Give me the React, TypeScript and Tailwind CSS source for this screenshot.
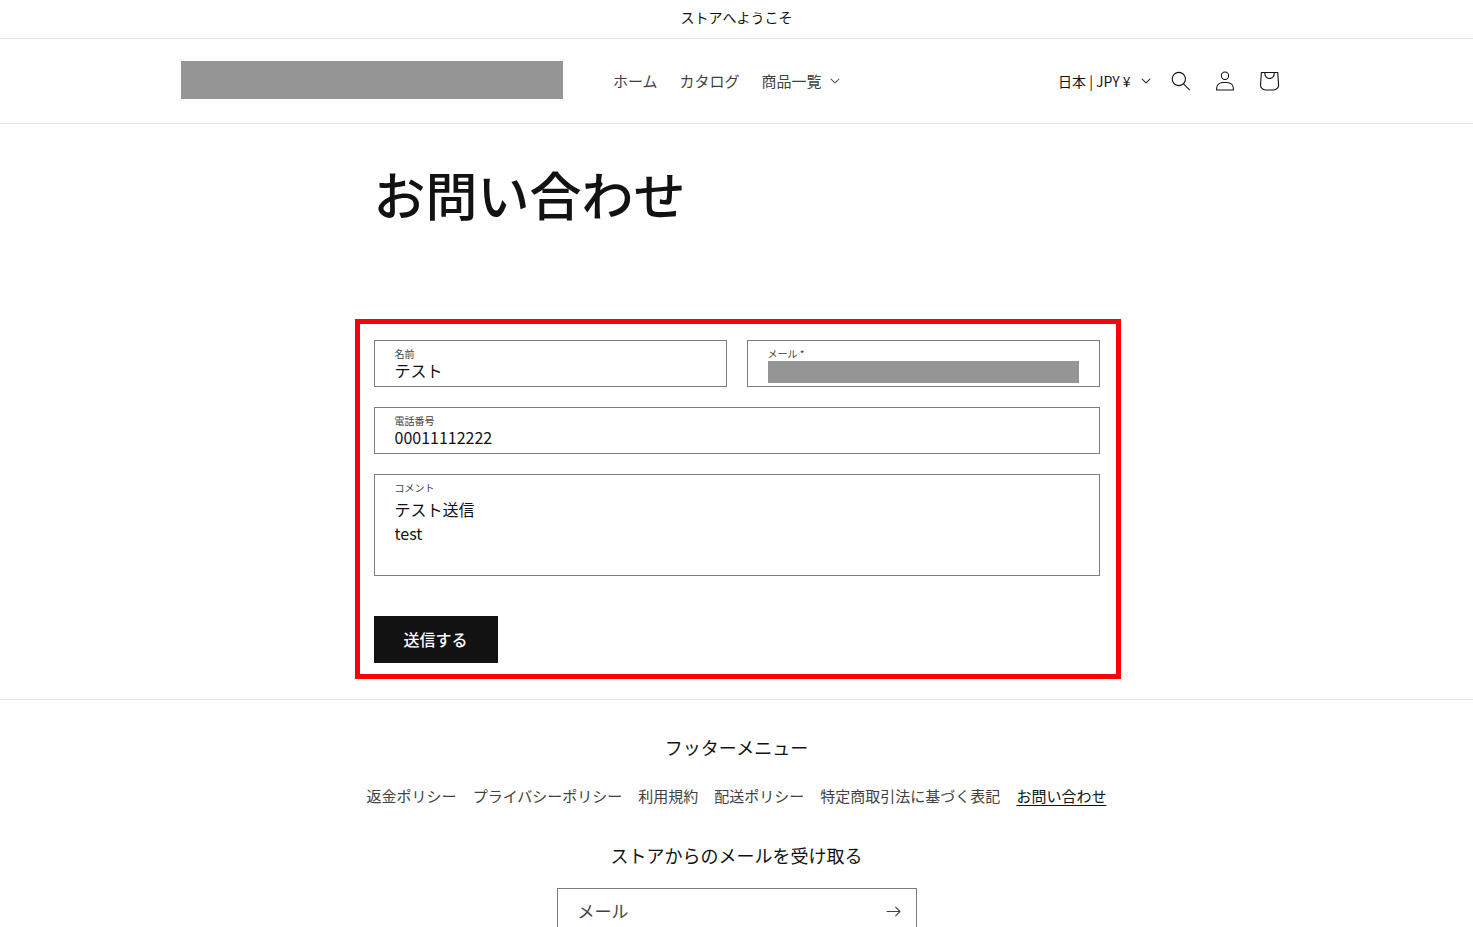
import React from "react";

function Caret({ className = "" }: { className?: string }) {
  return (
    <svg viewBox="0 0 10 6" className={`h-[6px] w-[10px] ${className}`} fill="currentColor" aria-hidden="true">
      <path
        fillRule="evenodd"
        clipRule="evenodd"
        d="M9.354.646a.5.5 0 00-.708 0L5 4.293 1.354.646a.5.5 0 00-.708.708l4 4a.5.5 0 00.708 0l4-4a.5.5 0 000-.708z"
      />
    </svg>
  );
}

function SearchIcon() {
  return (
    <svg viewBox="0 0 18 19" className="h-5 w-5" fill="currentColor" aria-hidden="true">
      <path
        fillRule="evenodd"
        clipRule="evenodd"
        d="M11.03 11.68A5.784 5.784 0 112.85 3.5a5.784 5.784 0 018.18 8.18zm.26 1.12a6.78 6.78 0 11.72-.7l5.4 5.4a.5.5 0 11-.71.7l-5.41-5.4z"
      />
    </svg>
  );
}

function AccountIcon() {
  return (
    <svg viewBox="0 0 18 19" className="h-5 w-5" fill="currentColor" aria-hidden="true">
      <path
        fillRule="evenodd"
        clipRule="evenodd"
        d="M6 4.5a3 3 0 116 0 3 3 0 01-6 0zm3-4a4 4 0 100 8 4 4 0 000-8zm5.58 12.15c1.12.82 1.83 2.24 1.91 4.85H1.51c.08-2.6.79-4.03 1.9-4.85C4.66 11.75 6.5 11.5 9 11.5s4.35.26 5.58 1.15zM9 10.5c-2.5 0-4.65.24-6.17 1.35C1.27 12.98.5 14.93.5 18v.5h17V18c0-3.07-.77-5.02-2.33-6.15-1.52-1.1-3.67-1.35-6.17-1.35z"
      />
    </svg>
  );
}

function CartIcon() {
  return (
    <svg viewBox="0 0 40 40" className="h-11 w-11" fill="currentColor" aria-hidden="true">
      <path
        fillRule="evenodd"
        d="M15.75 11.8h-3.16l-.77 11.6a5 5 0 0 0 4.99 5.34h7.38a5 5 0 0 0 4.99-5.33L28.4 11.8zm0 1h-2.22l-.71 10.67a4 4 0 0 0 3.99 4.27h7.38a4 4 0 0 0 4-4.27l-.72-10.67h-2.22v.63a4.75 4.75 0 1 1-9.5 0zm8.5 0h-7.5v.63a3.75 3.75 0 1 0 7.5 0z"
      />
    </svg>
  );
}

function ArrowIcon() {
  return (
    <svg viewBox="0 0 14 10" className="h-[11px] w-[15px]" fill="currentColor" aria-hidden="true">
      <path
        fillRule="evenodd"
        clipRule="evenodd"
        d="M8.537.808a.5.5 0 01.817-.162l4 4a.5.5 0 010 .708l-4 4a.5.5 0 11-.708-.708L11.793 5.5H1a.5.5 0 010-1h10.793L8.646 1.354a.5.5 0 01-.109-.546z"
      />
    </svg>
  );
}

function Field({ id, label, children }: { id: string; label: string; children: React.ReactNode }) {
  return (
    <div className="flex flex-col border border-[#7c7c7c] px-5 pt-[6px]">
      <label htmlFor={id} className="text-[10px] leading-[14px] text-[#414141]">
        {label}
      </label>
      {children}
    </div>
  );
}

const footerLinks = [
  "返金ポリシー",
  "プライバシーポリシー",
  "利用規約",
  "配送ポリシー",
  "特定商取引法に基づく表記",
];

export default function App() {
  return (
    <div className="bg-white font-['Noto_Sans_CJK_JP',sans-serif] text-[#121212]">
      <div className="border-b border-[#e7e7e7]">
        <p className="pb-[10px] pt-[6px] text-center text-sm leading-[22px]">ストアへようこそ</p>
      </div>

      <header className="border-b border-[#e7e7e7]">
        <div className="mx-auto flex h-[84px] max-w-[1201px] items-center pl-[45px] pr-[46px]">
          <a href="#" aria-label="ストア" className="mb-[2px] h-[38px] w-[382px] bg-[#959595]" />
          <nav className="ml-[50px] flex items-center gap-[22px] text-[15px] leading-6 text-[#414141]">
            <a href="#">ホーム</a>
            <a href="#">カタログ</a>
            <button type="button" className="flex items-center gap-2">
              商品一覧
              <Caret />
            </button>
          </nav>
          <div className="ml-auto flex items-center">
            <div className="relative mr-2 flex items-center">
              <select aria-label="国/地域" className="appearance-none bg-transparent pr-5 text-sm leading-6">
                <option>日本 | JPY ¥</option>
              </select>
              <Caret className="pointer-events-none absolute right-0" />
            </div>
            <button type="button" aria-label="検索" className="flex h-11 w-11 items-center justify-center">
              <SearchIcon />
            </button>
            <a href="#" aria-label="ログイン" className="flex h-11 w-11 items-center justify-center">
              <AccountIcon />
            </a>
            <a href="#" aria-label="カート" className="flex h-11 w-11 items-center justify-center">
              <CartIcon />
            </a>
          </div>
        </div>
      </header>

      <main className="mx-auto w-full max-w-[726px] pb-5 pt-[34px]">
        <h1 className="mb-[89px] text-[52px] font-medium leading-[72px]">お問い合わせ</h1>
        <form
          className="-ml-[19px] -mr-[21px] flex flex-col items-start border-[5px] border-[#fb0007] pb-[11px] pl-[14px] pr-4 pt-4"
          onSubmit={(e) => e.preventDefault()}
        >
          <div className="flex w-full flex-col gap-5">
            <div className="grid grid-cols-2 gap-5">
              <Field id="name" label="名前">
                <input id="name" type="text" defaultValue="テスト" className="mb-[3px] h-[22px] pb-1 outline-none" />
              </Field>
              <Field id="email" label="メール *">
                <input id="email" type="email" className="mb-[3px] h-[22px] w-full bg-[#959595] outline-none" />
              </Field>
            </div>
            <Field id="phone" label="電話番号">
              <input
                id="phone"
                type="tel"
                defaultValue="00011112222"
                className="mb-[3px] h-[22px] pb-1 outline-none"
              />
            </Field>
            <Field id="comment" label="コメント">
              <textarea
                id="comment"
                defaultValue={"テスト送信\ntest"}
                className="h-20 resize-none pt-[2px] leading-6 outline-none"
              />
            </Field>
          </div>
          <button
            type="submit"
            className="mt-10 h-[47px] bg-[#121212] px-[30px] pb-[2px] text-base font-medium leading-6 text-white"
          >
            送信する
          </button>
        </form>
      </main>

      <footer className="flex flex-col items-center border-t border-[#e7e7e7] px-4 pb-9 pt-[35px]">
        <h2 className="text-lg leading-6">フッターメニュー</h2>
        <ul className="mt-[25px] flex flex-wrap justify-center gap-4 text-[15px] leading-6 text-[#414141]">
          {footerLinks.map((text) => (
            <li key={text}>
              <a href="#">{text}</a>
            </li>
          ))}
          <li>
            <a href="#" aria-current="page" className="text-[#121212] underline underline-offset-[3px]">
              お問い合わせ
            </a>
          </li>
        </ul>
        <h2 className="mt-[35px] text-lg leading-6">ストアからのメールを受け取る</h2>
        <form
          className="mt-[21px] flex h-[47px] w-full max-w-[360px] items-center border border-[#7c7c7c] text-[#414141]"
          onSubmit={(e) => e.preventDefault()}
        >
          <input
            type="email"
            aria-label="メール"
            placeholder="メール"
            className="min-w-0 flex-1 pb-[2px] pl-5 text-[17px] outline-none placeholder:text-[#414141]"
          />
          <button type="submit" aria-label="登録" className="flex h-11 w-11 items-center justify-center">
            <ArrowIcon />
          </button>
        </form>
      </footer>
    </div>
  );
}
